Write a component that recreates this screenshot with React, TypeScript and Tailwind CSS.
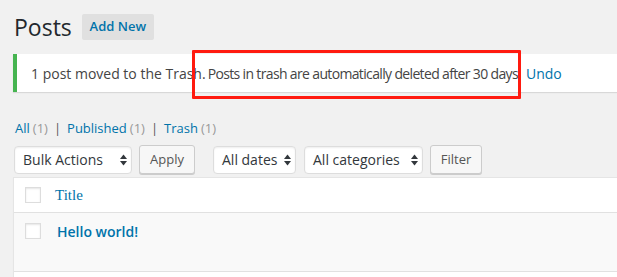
import React from "react";

const Arrows = () => (
  <svg width="7" height="12" viewBox="0 0 7 12" className="shrink-0">
    <path d="M3.5 0.5 L7 5 L0 5 Z" fill="#32373c" />
    <path d="M3.5 11.5 L7 7 L0 7 Z" fill="#32373c" />
  </svg>
);

const Select = ({ label, w }: { label: string; w: string }) => (
  <div
    className={`${w} h-[28px] bg-white border border-[#ddd] rounded-[4px] shadow-[inset_0_1px_2px_rgba(0,0,0,0.07)] flex items-center justify-between pl-[8px] pr-[4px] text-[14px] text-[#32373c]`}
  >
    <span>{label}</span>
    <Arrows />
  </div>
);

const Btn = ({ label, w }: { label: string; w: string }) => (
  <div
    className={`${w} h-[29px] bg-[#f7f7f7] border border-[#ccc] rounded-[3px] shadow-[0_1px_0_#ccc] flex items-center justify-center text-[13px] text-[#555]`}
  >
    {label}
  </div>
);

const Check = () => (
  <div className="w-[16px] h-[16px] bg-white border border-[#ddd] shadow-[inset_0_1px_2px_rgba(0,0,0,0.1)]" />
);

export default function App() {
  return (
    <div
      className="w-[617px] h-[277px] bg-[#f1f1f1] overflow-hidden"
      style={{ fontFamily: '"Open Sans", "Noto Sans", sans-serif' }}
    >
      <div className="pl-[13px] pt-[14px]">
        <div className="flex items-center h-[26px]">
          <h1 className="text-[23px] leading-none font-normal text-[#23282d] pl-[1px] mt-[1px]">
            Posts
          </h1>
          <div className="ml-[10px] w-[72px] h-[26px] bg-[#e0e0e0] rounded-[2px] flex items-center justify-center text-[13px] font-semibold text-[#0073aa]">
            Add New
          </div>
        </div>

        <div className="relative mt-[14px] w-[700px] h-[38px] bg-white border-l-[4px] border-[#46b450] shadow-[0_1px_1px_rgba(0,0,0,0.1)] flex items-center pl-[14px] text-[14px] text-[#444] whitespace-nowrap">
          <span>1 post moved to the Trash.</span>
          <span className="ml-[2px] tracking-[-0.65px]">
            Posts in trash are automatically deleted after 30 days
          </span>
          <span className="ml-[8px] text-[#0073aa]">Undo</span>
          <div className="absolute left-[175px] top-[-4px] w-[329px] h-[49px] border-[3px] border-[#ff1a0f] rounded-[1px]" />
        </div>

        <div className="mt-[28px] pl-[2px] flex items-center text-[13px] h-[18px]">
          <span className="text-[#0073aa]">All</span>
          <span className="text-[#999] ml-[3px]">(1)</span>
          <span className="text-[#555] mx-[6px]">|</span>
          <span className="text-[#0073aa]">Published</span>
          <span className="text-[#999] ml-[3px]">(1)</span>
          <span className="text-[#555] mx-[6px]">|</span>
          <span className="text-[#0073aa]">Trash</span>
          <span className="text-[#999] ml-[3px]">(1)</span>
        </div>

        <div className="mt-[7px] pl-[1px] flex items-center">
          <Select label="Bulk Actions" w="w-[118px]" />
          <div className="ml-[7px]">
            <Btn label="Apply" w="w-[56px]" />
          </div>
          <div className="ml-[18px]">
            <Select label="All dates" w="w-[83px]" />
          </div>
          <div className="ml-[8px]">
            <Select label="All categories" w="w-[119px]" />
          </div>
          <div className="ml-[7px]">
            <Btn label="Filter" w="w-[52px]" />
          </div>
        </div>

        <div className="mt-[3px] w-[700px] bg-white border border-[#e5e5e5] shadow-[0_1px_1px_rgba(0,0,0,0.04)]">
          <div className="h-[35px] flex items-center border-b border-[#e1e1e1] pl-[11px]">
            <Check />
            <span
              className="ml-[14px] text-[15px] text-[#0073aa]"
              style={{ fontFamily: '"Liberation Serif", "DejaVu Serif", serif' }}
            >
              Title
            </span>
          </div>
          <div className="h-[59px] bg-[#f9f9f9] border-b border-[#e1e1e1] pl-[11px] pt-[10px] flex items-start">
            <Check />
            <span className="ml-[16px] -mt-[2px] text-[14px] font-semibold text-[#0073aa]">
              Hello world!
            </span>
          </div>
          <div className="h-[20px] bg-white" />
        </div>
      </div>
    </div>
  );
}
